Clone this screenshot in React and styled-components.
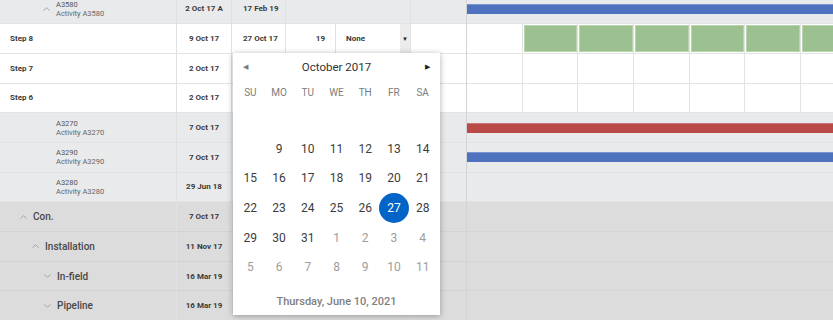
import React from "react";
import styled, { createGlobalStyle, css } from "styled-components";

const GlobalStyle = createGlobalStyle`
  html, body {
    margin: 0;
    padding: 0;
    background: #ffffff;
    overflow: hidden;
  }
  body {
    font-family: Roboto, "Noto Sans", "Liberation Sans", sans-serif;
  }
`;

const ROW_H = 29.7;
const CELL_W = 55.7;

const rowTones = {
  summary: "#e9eaec",
  step: "#ffffff",
  activity: "#e9eaec",
  group: "#dcdcdc",
};

// Page layout
const Page = styled.div`
  position: relative;
  width: 833px;
  height: 320px;
  overflow: hidden;
`;

const Board = styled.div`
  display: flex;
  margin-top: -5.5px;
`;

const Table = styled.div`
  width: 466px;
  flex-shrink: 0;
  display: flex;
  flex-direction: column;
`;

const Gantt = styled.div`
  flex: 1;
  display: flex;
  flex-direction: column;
  border-left: 1px solid #d2d3d5;
  overflow: hidden;
`;

const Row = styled.div`
  display: flex;
  height: ${ROW_H}px;
  box-sizing: border-box;
  background: ${({ $kind }) => rowTones[$kind]};
  border-bottom: 1px solid ${({ $kind }) => ($kind === "group" ? "#d3d3d3" : "#e2e3e5")};
`;

const Cell = styled.div`
  box-sizing: border-box;
  width: ${({ $w }) => $w}px;
  flex-shrink: 0;
  display: flex;
  align-items: center;
  border-right: 1px solid ${({ $line }) => ($line ? "#e0e1e3" : "transparent")};
  font-size: 8px;
  font-weight: 700;
  color: #3a3a3a;
  justify-content: ${({ $align }) => $align || "flex-start"};
  padding: ${({ $pad }) => $pad || "0"};
  white-space: nowrap;
`;

const NameCell = styled(Cell)`
  gap: 6px;
`;

const StepName = styled.span`
  font-size: 8px;
  font-weight: 700;
  color: #3a3a3a;
`;

const GroupName = styled.span`
  font-size: 10px;
  font-weight: 500;
  color: #474747;
`;

const Stack = styled.div`
  display: flex;
  flex-direction: column;
  line-height: 9px;
`;

const Code = styled.span`
  font-size: 7.5px;
  font-weight: 400;
  color: #555555;
`;

const Title = styled.span`
  font-size: 7.5px;
  font-weight: 400;
  color: #666666;
`;

const Chevron = styled.svg`
  width: 7px;
  height: 4px;
  flex-shrink: 0;
  stroke: #a3a3a3;
  stroke-width: 1;
  fill: none;
`;

const Spacer = styled.span`
  width: 7px;
  flex-shrink: 0;
`;

const DropButton = styled.div`
  width: 10px;
  height: 100%;
  margin-left: auto;
  background: #ececec;
  display: flex;
  align-items: center;
  justify-content: center;
  font-size: 6px;
  color: #222;
`;

// Gantt side
const Track = styled.div`
  display: flex;
  align-items: center;
  height: ${ROW_H}px;
  box-sizing: border-box;
  background: ${({ $kind }) => rowTones[$kind]};
  border-bottom: 1px solid ${({ $kind }) => ($kind === "group" ? "#d6d6d6" : "#e2e3e5")};
  ${({ $grid }) =>
    $grid &&
    css`
      align-items: stretch;
    `}
`;

const Bar = styled.div`
  width: 100%;
  height: 10px;
  box-sizing: border-box;
  background: ${({ $color }) => $color};
  border-top: 1px solid rgba(255, 255, 255, 0.25);
`;

const GridCell = styled.div`
  box-sizing: border-box;
  width: ${({ $first }) => ($first ? 55.5 : CELL_W)}px;
  flex-shrink: 0;
  border-right: 1px solid #e3e3e3;
  padding: 1px 0 1px 1px;
  display: flex;
`;

const Fill = styled.div`
  flex: 1;
  box-sizing: border-box;
  background: #9cc08f;
  border: 1px solid #b8d4ad;
`;

// Calendar popup
const Calendar = styled.div`
  position: absolute;
  left: 233px;
  top: 53px;
  width: 207px;
  height: 262px;
  background: #ffffff;
  box-shadow: 0 1px 6px rgba(0, 0, 0, 0.32);
  display: flex;
  flex-direction: column;
  box-sizing: border-box;
  padding: 0 3px;
`;

const CalHeader = styled.div`
  height: 28px;
  display: flex;
  align-items: center;
  justify-content: space-between;
  padding: 0 7px 0 7px;
`;

const Arrow = styled.span`
  font-size: 7px;
  color: ${({ $dark }) => ($dark ? "#1e1e1e" : "#7a7a7a")};
`;

const Month = styled.span`
  font-size: 11.5px;
  color: #333;
`;

const Week = styled.div`
  display: grid;
  grid-template-columns: repeat(7, minmax(0, 1fr));
  height: ${({ $h }) => $h}px;
  align-items: center;
`;

const DayName = styled.span`
  text-align: center;
  font-size: 10px;
  color: #7d7d7d;
`;

const Day = styled.span`
  justify-self: center;
  width: 30px;
  height: 30px;
  border-radius: 50%;
  display: flex;
  align-items: center;
  justify-content: center;
  font-size: 12px;
  color: ${({ $muted }) => ($muted ? "#9d9d9d" : "#3c3c3c")};
  ${({ $selected }) =>
    $selected &&
    css`
      background: #0264c7;
      color: #ffffff;
    `}
`;

const Today = styled.div`
  flex: 1;
  display: flex;
  align-items: center;
  justify-content: center;
  padding-top: 5px;
  font-size: 11px;
  font-weight: 500;
  color: #808080;
`;

const rows = [
  { kind: "summary", code: "A3580", title: "Activity A3580", start: "2 Oct 17 A", finish: "17 Feb 19", bar: "#4e72bd" },
  { kind: "step", name: "Step 8", start: "9 Oct 17", finish: "27 Oct 17", duration: "19", pred: "None", green: true },
  { kind: "step", name: "Step 7", start: "2 Oct 17" },
  { kind: "step", name: "Step 6", start: "2 Oct 17" },
  { kind: "activity", code: "A3270", title: "Activity A3270", start: "7 Oct 17", bar: "#b94a48" },
  { kind: "activity", code: "A3290", title: "Activity A3290", start: "7 Oct 17", bar: "#4e72bd" },
  { kind: "activity", code: "A3280", title: "Activity A3280", start: "29 Jun 18" },
  { kind: "group", name: "Con.", level: 0, open: true, start: "7 Oct 17" },
  { kind: "group", name: "Installation", level: 1, open: true, start: "11 Nov 17" },
  { kind: "group", name: "In-field", level: 2, open: false, start: "16 Mar 19" },
  { kind: "group", name: "Pipeline", level: 2, open: false, start: "16 Mar 19" },
];

const weeks = [
  [null, null, null, null, null, null, null],
  [null, 9, 10, 11, 12, 13, 14],
  [15, 16, 17, 18, 19, 20, 21],
  [22, 23, 24, 25, 26, 27, 28],
  [29, 30, 31, "1", "2", "3", "4"],
  ["5", "6", "7", "8", "9", "10", "11"],
];

const Toggle = ({ open }) => (
  <Chevron viewBox="0 0 7 4">
    {open ? <polyline points="0.5,3.6 3.5,0.6 6.5,3.6" /> : <polyline points="0.5,0.4 3.5,3.4 6.5,0.4" />}
  </Chevron>
);

const NameContent = ({ row }) => {
  if (row.kind === "step") {
    return (
      <NameCell $w={177} $line $pad="0 0 0 10px">
        <StepName>{row.name}</StepName>
      </NameCell>
    );
  }
  if (row.kind === "group") {
    return (
      <NameCell $w={177} $line $pad={`0 0 0 ${20 + row.level * 12}px`}>
        <Toggle open={row.open} />
        <GroupName>{row.name}</GroupName>
      </NameCell>
    );
  }
  return (
    <NameCell $w={177} $line $pad="0 0 0 43px">
      {row.kind === "summary" ? <Toggle open /> : <Spacer />}
      <Stack>
        <Code>{row.code}</Code>
        <Title>{row.title}</Title>
      </Stack>
    </NameCell>
  );
};

const TableRow = ({ row }) => (
  <Row $kind={row.kind}>
    <NameContent row={row} />
    <Cell $w={55} $line $align="center">{row.start}</Cell>
    <Cell $w={54} $line $pad="0 0 0 11px">{row.finish}</Cell>
    <Cell $w={50} $line={row.kind === "step"} $align="flex-end" $pad="0 10px 0 0">{row.duration}</Cell>
    <Cell $w={75} $line $pad="0 0 0 10px">
      {row.pred}
      {row.pred && <DropButton>▼</DropButton>}
    </Cell>
    <Cell $w={55} />
  </Row>
);

const GanttRow = ({ row }) => {
  if (row.kind === "step") {
    return (
      <Track $kind={row.kind} $grid>
        {Array.from({ length: 7 }).map((_, i) => (
          <GridCell key={i} $first={i === 0}>
            {row.green && i > 0 && <Fill />}
          </GridCell>
        ))}
      </Track>
    );
  }
  return <Track $kind={row.kind}>{row.bar && <Bar $color={row.bar} />}</Track>;
};

const App = () => (
  <Page>
    <GlobalStyle />
    <Board>
      <Table>
        {rows.map((row, i) => (
          <TableRow key={i} row={row} />
        ))}
      </Table>
      <Gantt>
        {rows.map((row, i) => (
          <GanttRow key={i} row={row} />
        ))}
      </Gantt>
    </Board>

    <Calendar>
      <CalHeader>
        <Arrow>◀</Arrow>
        <Month>October 2017</Month>
        <Arrow $dark>▶</Arrow>
      </CalHeader>
      <Week $h={23}>
        {["SU", "MO", "TU", "WE", "TH", "FR", "SA"].map((d) => (
          <DayName key={d}>{d}</DayName>
        ))}
      </Week>
      {weeks.map((week, w) => (
        <Week key={w} $h={ROW_H}>
          {week.map((d, i) =>
            d === null ? (
              <span key={i} />
            ) : (
              <Day key={i} $muted={typeof d === "string"} $selected={d === 27}>
                {d}
              </Day>
            )
          )}
        </Week>
      ))}
      <Today>Thursday, June 10, 2021</Today>
    </Calendar>
  </Page>
);

export default App;
